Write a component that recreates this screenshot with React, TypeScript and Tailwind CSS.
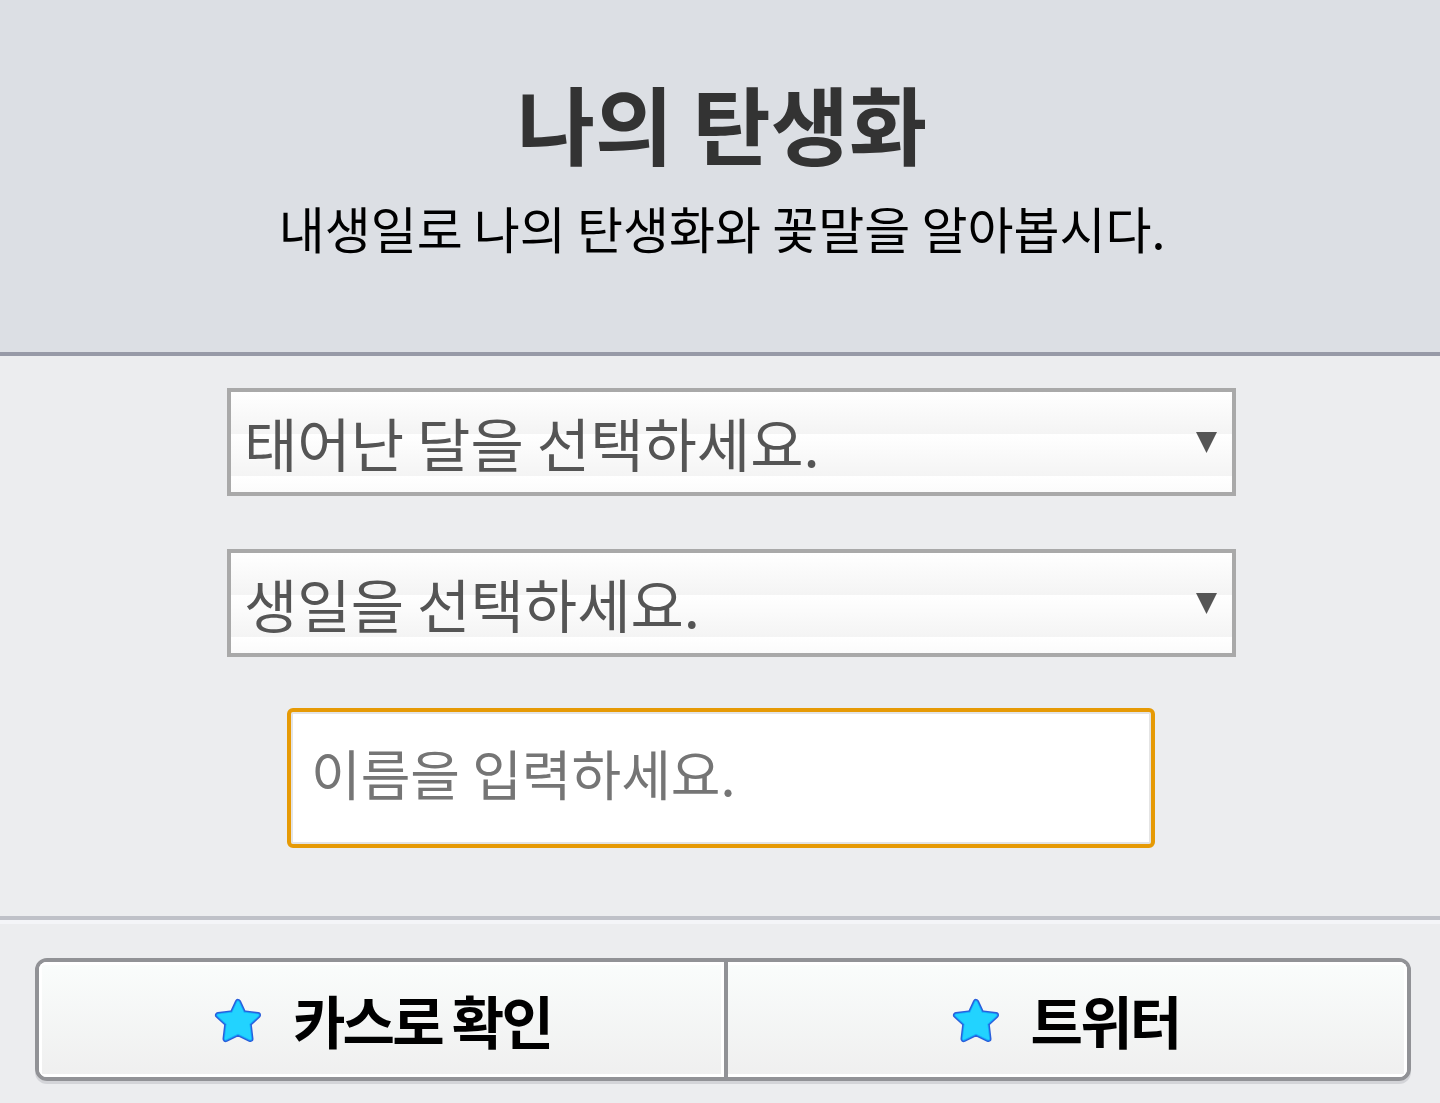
import React, { useState } from 'react';

const MONTHS = Array.from({ length: 12 }, (_, i) => i + 1);
const DAYS = Array.from({ length: 31 }, (_, i) => i + 1);

const STAR = 'M24 6.200L29.200 17.400L43.800 19.200L34.500 27.700L36.300 42.800L24 36.800L11.700 42.800L13.500 27.700L4.200 19.200L18.800 17.400Z';

interface PickerProps {
  id: string;
  label: string;
  unit: string;
  options: number[];
  value: string;
  onChange: (value: string) => void;
}

function Picker({ id, label, unit, options, value, onChange }: PickerProps) {
  return (
    <div className="relative w-full max-w-[1009px]">
      <select
        id={id}
        aria-label={label}
        value={value}
        onChange={(e) => onChange(e.target.value)}
        className="block h-[108px] w-full appearance-none rounded-none border-4 border-[#a9a9a9] bg-[repeating-linear-gradient(to_bottom,#ffffff_0px,#f4f4f4_42px)] px-[13px] text-[58px] leading-normal text-[#555555] outline-none"
      >
        <option value="">{label}</option>
        {options.map((n) => (
          <option key={n} value={n}>{n}{unit}</option>
        ))}
      </select>
      <svg viewBox="0 0 21 21" aria-hidden="true" className="pointer-events-none absolute top-11 right-[19px] size-[21px]">
        <path d="M0 0h21L10.5 21z" fill="#555555" />
      </svg>
    </div>
  );
}

// Same outline three times: dark rim, mid-blue edge, bright body
function StarIcon() {
  return (
    <svg viewBox="0 0 48 48" aria-hidden="true" className="size-12 shrink-0" strokeLinejoin="round">
      <path d={STAR} fill="#2a5fdc" stroke="#2a5fdc" strokeWidth="6.4" />
      <path d={STAR} fill="#12aefb" stroke="#12aefb" strokeWidth="3.6" />
      <path d={STAR} fill="#22d3ff" stroke="#22d3ff" strokeWidth="1.8" />
    </svg>
  );
}

export default function App() {
  const [month, setMonth] = useState('');
  const [day, setDay] = useState('');
  const [name, setName] = useState('');

  const shareButton =
    'flex h-[115px] w-full items-center justify-center gap-[31px] bg-linear-to-b from-[#fafdfc] to-[#efefef] text-[57px] leading-none font-bold tracking-tighter text-black';

  return (
    <div className="min-h-screen bg-[#ecedef] font-['Noto_Sans_CJK_KR',sans-serif] text-black">
      <header className="border-b-4 border-[#979aa7] bg-[#dcdfe4] pt-[62px] pb-[85px] pl-1 text-center">
        <h1 className="mb-[5px] text-[85px] leading-[120px] font-bold text-[#333333]">나의 탄생화</h1>
        <p className="text-[50px] leading-[80px]">내생일로 나의 탄생화와 꽃말을 알아봅시다.</p>
      </header>

      <form onSubmit={(e) => e.preventDefault()}>
        {/* Birthday + name */}
        <div className="flex flex-col items-center pt-8 pb-[68px] pl-0.5">
          <div className="flex w-full flex-col items-center gap-[53px] pl-[21px]">
            <Picker id="month" label="태어난 달을 선택하세요." unit="월" options={MONTHS} value={month} onChange={setMonth} />
            <Picker id="day" label="생일을 선택하세요." unit="일" options={DAYS} value={day} onChange={setDay} />
          </div>
          <input
            id="name"
            type="text"
            aria-label="이름"
            value={name}
            onChange={(e) => setName(e.target.value)}
            placeholder="이름을 입력하세요."
            className="mt-[51px] h-[140px] w-full max-w-[868px] rounded-md border-4 border-[#e69a05] bg-white px-5 pb-3 text-[54px] text-[#333333] shadow-[inset_0_0_0_2px_#e4e4e4] outline-none placeholder:text-[#757575]"
          />
        </div>

        {/* Share buttons */}
        <div className="border-t-4 border-[#bfc1c8] pt-[38px] pr-[29px] pb-[22px] pl-[35px] shadow-[inset_0_4px_0_#f4f5f8]">
          <div className="grid grid-cols-[689fr_679fr] overflow-hidden rounded-xl border-4 border-[#919296] shadow-[0_3px_0_#d3d4d8]">
            <div className="border-r-4 border-[#919296]">
              <button type="submit" className={`${shareButton} pl-0.5 shadow-[inset_0_0_0_3px_#ffffff]`}>
                <StarIcon />
                카스로 확인
              </button>
            </div>
            <button type="submit" className={`${shareButton} pr-1 shadow-[inset_-3px_-3px_0_#ffffff,inset_0_3px_0_#ffffff]`}>
              <StarIcon />
              트위터
            </button>
          </div>
        </div>
      </form>
    </div>
  );
}
